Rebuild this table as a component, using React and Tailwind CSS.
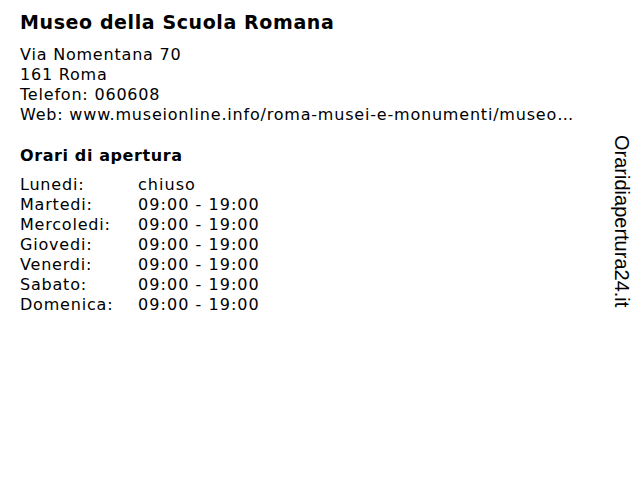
export default function App() {
  const hours = [
    ["Lunedi:", "chiuso"],
    ["Martedi:", "09:00 - 19:00"],
    ["Mercoledi:", "09:00 - 19:00"],
    ["Giovedi:", "09:00 - 19:00"],
    ["Venerdi:", "09:00 - 19:00"],
    ["Sabato:", "09:00 - 19:00"],
    ["Domenica:", "09:00 - 19:00"],
  ];
  return (
    <div className="w-[640px] h-[480px] bg-white flex text-black overflow-hidden">
      <div className="w-[585px] shrink-0 pl-5 pt-[9px] font-['DejaVu_Sans',Verdana,sans-serif]">
        <h1 className="text-[19px] font-bold leading-[26px] tracking-[0.6px]">Museo della Scuola Romana</h1>
        <div className="mt-[10px] text-[16px] leading-[20px] tracking-[0.8px]">
          <div>Via Nomentana 70</div>
          <div>161 Roma</div>
          <div>Telefon: 060608</div>
          <div className="w-[557px] truncate">Web: www.museionline.info/roma-musei-e-monumenti/museo-della-scuola-romana</div>
        </div>
        <h2 className="mt-[21px] text-[16px] font-bold leading-[20px] tracking-[0.6px]">Orari di apertura</h2>
        <div className="mt-[9px] text-[16px] leading-[20px] tracking-[0.8px]">
          {hours.map(([d, h]) => (
            <div key={d} className="flex">
              <span className="w-[118px]">{d}</span>
              <span className="tracking-[1.05px]">{h}</span>
            </div>
          ))}
        </div>
      </div>
      <div className="flex-1 flex justify-end pr-[8px] pt-[135px]">
        <div className="[writing-mode:vertical-rl] font-['Liberation_Sans',Arial,sans-serif] text-[20px] leading-[20px]">
          Oraridiapertura24.it
        </div>
      </div>
    </div>
  );
}
